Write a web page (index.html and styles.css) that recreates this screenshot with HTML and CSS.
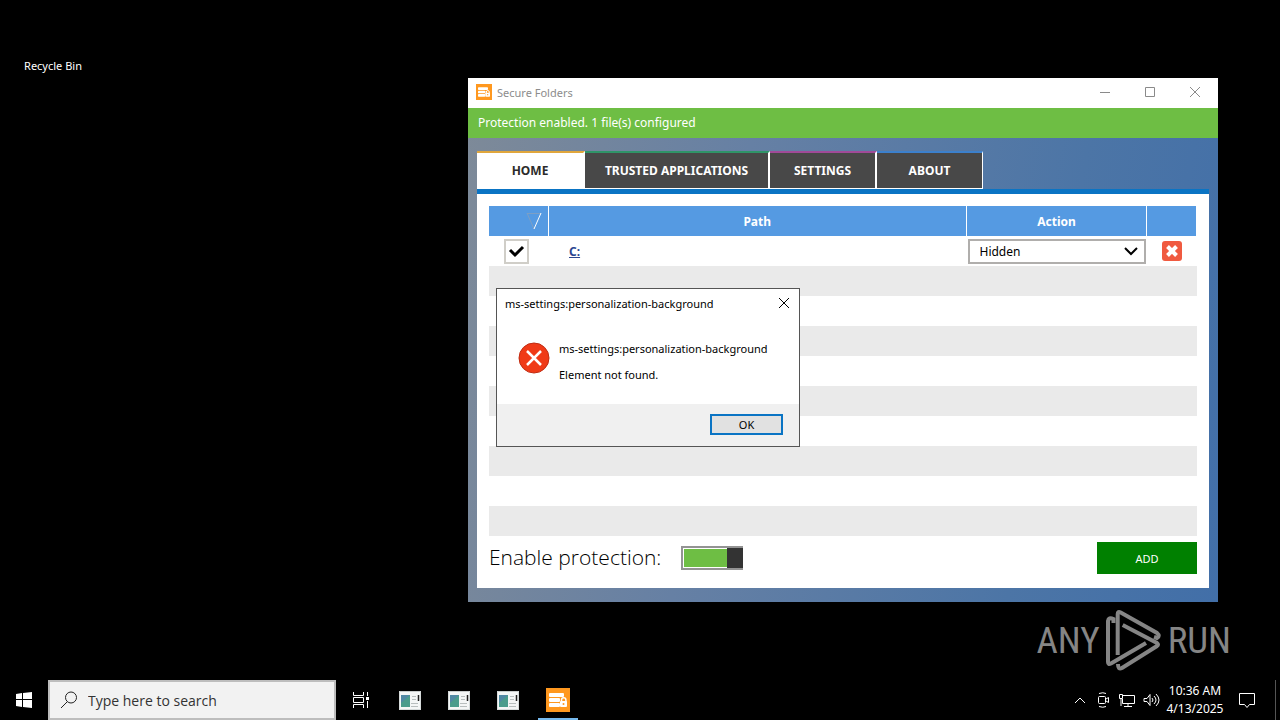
FILE: index.html
```html
<!DOCTYPE html>
<html lang="en">
  <head>
    <meta charset="UTF-8">
    <link rel="stylesheet" href="styles.css">
    <title>Secure Folders</title>
  </head>
  <body>
    <svg class="defs" aria-hidden="true">
      <symbol id="app-icon" viewBox="0 0 24 24">
        <rect width="24" height="24" fill="#ff981f"/>
        <rect x="3" y="5" width="15" height="4" rx="1" fill="#fff"/>
        <rect x="3" y="10" width="11" height="4" rx="1" fill="#fff"/>
        <rect x="3" y="15" width="11" height="4" rx="1" fill="#fff"/>
        <path d="M15.500 14v-2a2.200 2.200 0 0 1 4.400 0v2" fill="none" stroke="#fff" stroke-width="1.500"/>
        <rect x="14" y="13" width="7" height="6" rx="1" fill="#fff"/>
        <circle cx="17.500" cy="16" r="1" fill="#ff981f"/>
      </symbol>
      <symbol id="page-icon" viewBox="0 0 22 19">
        <rect width="22" height="19" fill="#f4f6f6"/>
        <path d="M0 .5h22" stroke="#c8cccc"/>
        <path d="M.5 0v19M21.500 0v19M0 18.500h22" stroke="#d5dada"/>
        <rect x="2" y="4" width="9" height="12" fill="#4a9c8c"/>
        <path d="M2 4h9l-9 8z" fill="#5088a4"/>
        <path d="M13 5.500h4M13 8.500h4M12 12.500h7M12 15.500h7" stroke="#b8bebe"/>
        <path d="M19.500 4v6" stroke="#222" stroke-width="1.500"/>
      </symbol>
    </svg>

    <main class="desktop">
      <div class="recycle">Recycle Bin</div>

      <section class="window">
        <header class="titlebar">
          <svg class="titlebar-icon"><use href="#app-icon"/></svg>
          <span class="title">Secure Folders</span>
          <button class="win-btn" aria-label="Minimize"><svg width="12" height="12"><path d="M1 6.500h10"/></svg></button>
          <button class="win-btn" aria-label="Maximize"><svg width="12" height="12"><path d="M1.500 1.500h9v9h-9z"/></svg></button>
          <button class="win-btn" aria-label="Close"><svg width="12" height="12"><path d="M1 1l10 10M11 1L1 11"/></svg></button>
        </header>
        <div class="status">Protection enabled. 1 file(s) configured</div>
        <div class="window-body">
          <nav class="tabs">
            <button class="tab tab-home active">HOME</button>
            <button class="tab tab-trusted">TRUSTED APPLICATIONS</button>
            <button class="tab tab-settings">SETTINGS</button>
            <button class="tab tab-about">ABOUT</button>
          </nav>
          <div class="panel">
            <table class="paths">
              <thead>
                <tr>
                  <th class="col-check"><svg class="sort" width="16" height="18"><path d="M1 1.500h14" stroke="#7d9fc4"/><path d="M1 1l7 16" stroke="#7d9fc4"/><path d="M15 1L8 17" stroke="#fff"/></svg></th>
                  <th>Path</th>
                  <th class="col-action">Action</th>
                  <th class="col-remove"></th>
                </tr>
              </thead>
              <tbody>
                <tr>
                  <td><input class="check" type="checkbox" aria-label="Enabled" checked></td>
                  <td class="path"><a href="#">C:</a></td>
                  <td class="action"><select class="select" aria-label="Action"><option>Hidden</option></select></td>
                  <td class="remove"><button class="remove-btn" aria-label="Remove"><svg width="20" height="20"><rect width="20" height="20" rx="3" fill="#f05a40"/><path d="M5.500 5.500l9 9M14.500 5.500l-9 9" stroke="#fff" stroke-width="4"/></svg></button></td>
                </tr>
                <tr><td colspan="4"></td></tr>
                <tr><td colspan="4"></td></tr>
                <tr><td colspan="4"></td></tr>
                <tr><td colspan="4"></td></tr>
                <tr><td colspan="4"></td></tr>
                <tr><td colspan="4"></td></tr>
                <tr><td colspan="4"></td></tr>
                <tr><td colspan="4"></td></tr>
                <tr><td colspan="4"></td></tr>
              </tbody>
            </table>
            <div class="panel-footer">
              <label class="protect-label" for="protect">Enable protection:</label>
              <input class="toggle" type="checkbox" id="protect" checked>
              <button class="add">ADD</button>
            </div>
          </div>
        </div>
      </section>

      <section class="dialog" role="dialog">
        <header class="dialog-title">
          <span>ms-settings:personalization-background</span>
          <button class="dialog-close" aria-label="Close"><svg width="12" height="12"><path d="M1 1l10 10M11 1L1 11"/></svg></button>
        </header>
        <div class="dialog-body">
          <svg class="error" viewBox="0 0 32 32"><circle cx="16" cy="16" r="15" fill="#f03a17" stroke="#c02c12"/><path d="M9 9l14 14M23 9L9 23" stroke="#fff" stroke-width="2.500"/></svg>
          <div>
            <p>ms-settings:personalization-background</p>
            <p>Element not found.</p>
          </div>
        </div>
        <footer class="dialog-footer"><button class="ok">OK</button></footer>
      </section>

      <div class="watermark">
        <span>ANY</span>
        <svg width="60" height="64" viewBox="0 0 60 64">
          <path d="M13.700 47V6q0-3 3-1.500L53 25q3.500 3 0 5l-3-1"/>
          <path d="M18.700 17L53 35q2 1.500 0 3L18 60q-4 2-4-4"/>
          <path d="M9.500 15v-4q-5-2-5.500 2v41q0 3 3 1.500L42 35"/>
        </svg>
        <span>RUN</span>
      </div>
    </main>

    <footer class="taskbar">
      <button class="start" aria-label="Start"><svg width="16" height="16"><path d="M0 2l6-1v6H0zM7 1l9-1v7H7zM0 8h6v7l-6-1zM7 8h9v8l-9-1z" fill="#fff"/></svg></button>
      <div class="search">
        <svg width="18" height="18"><circle cx="11" cy="6.500" r="5.500"/><path d="M7 11l-6 6"/></svg>
        <input type="text" placeholder="Type here to search" aria-label="Search">
      </div>
      <button class="task-view" aria-label="Task view"><svg width="18" height="16"><path d="M1.500 0v3.500h10V0M1.500 16v-3.500h10V16M1.500 5.500h10v5h-10zM15.500 0v4M15.500 9v7"/><path d="M14 5h3v3h-3z" fill="#fff" stroke="none"/></svg></button>
      <button class="task" aria-label="Window"><svg width="22" height="19"><use href="#page-icon"/></svg></button>
      <button class="task" aria-label="Window"><svg width="22" height="19"><use href="#page-icon"/></svg></button>
      <button class="task" aria-label="Window"><svg width="22" height="19"><use href="#page-icon"/></svg></button>
      <button class="task task-active" aria-label="Secure Folders"><svg width="24" height="24"><use href="#app-icon"/></svg></button>
      <div class="tray">
        <svg width="12" height="16"><path d="M1 11l5-5 5 5"/></svg>
        <svg width="16" height="16"><rect x="4.500" y="4.500" width="7" height="7" rx="1"/><path d="M12 7l2.500-1.500v5L12 9M5 1.500q4-1.500 7 0M5 14.500q4 1.500 7 0"/></svg>
        <svg width="17" height="16"><path d="M5 3.500h11.500v8H4.500V7M1.500 2.500h3v4h-3zM10 11.500v3M6 14.500h8M3 7v7"/></svg>
        <svg width="17" height="16"><path d="M1 6.500h3l3-4v11l-3-4H1zM9 6q2 2 0 4M11 4q4 4 0 8M13 2q6 6 0 12"/></svg>
      </div>
      <div class="clock"><span>10:36 AM</span><span>4/13/2025</span></div>
      <button class="notify" aria-label="Notifications"><svg width="16" height="17"><path d="M.5 1.500h15v11h-5l-2.500 3-2.500-3h-5z"/></svg></button>
      <div class="show-desktop"></div>
    </footer>
  </body>
</html>
```

FILE: styles.css
```css
* {
    box-sizing: border-box;
}

body {
    margin: 0;
    min-height: 100vh;
    display: flex;
    flex-direction: column;
    background-color: #000;
    font-family: "Noto Sans", "Open Sans", sans-serif;
    font-size: 12px;
}

button {
    padding: 0;
    border: none;
    background: none;
    font: inherit;
    display: flex;
    align-items: center;
    justify-content: center;
}

svg {
    display: block;
    fill: none;
    stroke-width: 1;
}

.defs {
    position: absolute;
    width: 0;
    height: 0;
}

.desktop {
    position: relative;
    flex: 1;
}

.recycle {
    width: 106px;
    padding-top: 57px;
    font-size: 11px;
    line-height: 18px;
    text-align: center;
    color: #fff;
}

/* main window */
.window {
    position: absolute;
    left: 468px;
    top: 78px;
    width: 750px;
    background: linear-gradient(100deg, #7e8a98, #6680a4 35%, #4c75a6 75%, #426fa8);
}

.titlebar {
    display: flex;
    align-items: center;
    height: 30px;
    padding: 0 1px 2px 8px;
    background-color: #fff;
    color: #8c8c8c;
}

.titlebar-icon {
    width: 16px;
    height: 16px;
    margin-right: 5px;
}

.title {
    flex: 1;
    font-size: 11px;
}

.win-btn {
    width: 45px;
    height: 28px;
    stroke: #8a8a8a;
}

.status {
    padding: 0 10px;
    line-height: 30px;
    background-color: #6ebe44;
    color: #fff;
}

.window-body {
    padding: 13px 9px 14px;
}

.tabs {
    display: flex;
}

.tab {
    height: 38px;
    border-top: 2px solid;
    border-right: 2px solid #fff;
    border-bottom: 1px solid #fff;
    background-color: #484848;
    color: #fff;
    font-weight: bold;
}

.tab-home {
    width: 108px;
    border-top-color: #e0a63c;
}

.tab-trusted {
    width: 185px;
    border-top-color: #2f9468;
}

.tab-settings {
    width: 107px;
    border-top-color: #a04a98;
}

.tab-about {
    width: 106px;
    border-top-color: #3c80cc;
    border-right-width: 1px;
}

.tab.active {
    background-color: #fff;
    color: #2b2b2b;
}

.panel {
    padding: 12px 12px 14px;
    border-top: 5px solid #0a74c4;
    background-color: #fff;
}

.paths {
    width: 100%;
    border-collapse: collapse;
    table-layout: fixed;
}

.paths th,
.paths td {
    height: 30px;
    padding: 0;
}

.paths th {
    background-color: #559ae2;
    border-right: 1px solid #fff;
    color: #fff;
}

.paths tbody tr:nth-child(even) {
    background-color: #eaeaea;
}

.col-check {
    width: 59px;
}

.col-action {
    width: 180px;
}

.col-remove {
    width: 50px;
}

.sort {
    margin-left: 37px;
}

.check {
    appearance: none;
    display: block;
    width: 25px;
    height: 25px;
    margin: 0 0 0 15px;
    border: 2px solid #d0cec8;
    background: #fff url('data:image/svg+xml,<svg xmlns="http://www.w3.org/2000/svg" width="21" height="21"><path d="M4 9l5 5 8-8" fill="none" stroke="black" stroke-width="3"/></svg>') center no-repeat;
}

.path {
    font-weight: bold;
}

.path a {
    margin-left: 21px;
    color: #2c4690;
}

.select {
    appearance: none;
    display: block;
    width: 178px;
    height: 25px;
    margin-left: 1px;
    padding: 0 10px;
    border: 2px solid #b0aeac;
    border-radius: 0;
    color: #000;
    font: inherit;
    background: #fff url('data:image/svg+xml,<svg xmlns="http://www.w3.org/2000/svg" width="14" height="9"><path d="M1 1l6 6 6-6" fill="none" stroke="black" stroke-width="2"/></svg>') right 6px center no-repeat;
}

.remove-btn {
    margin: auto;
}

.panel-footer {
    display: flex;
    align-items: center;
    padding-top: 6px;
}

.protect-label {
    padding-bottom: 2px;
    font-family: "Open Sans", "Noto Sans", sans-serif;
    font-size: 21px;
    font-weight: 300;
    line-height: 30px;
    color: #000;
}

.toggle {
    appearance: none;
    width: 62px;
    height: 24px;
    margin: 0 0 0 20px;
    padding: 1px 0 1px 1px;
    border: 2px solid #939393;
    border-right: none;
    background:
        linear-gradient(#333, #333) right / 16px 100% no-repeat border-box,
        linear-gradient(#6ebe44, #6ebe44) content-box,
        #fff;
}

.add {
    width: 100px;
    height: 32px;
    margin-left: auto;
    background-color: #008000;
    color: #fff;
    font-size: 11px;
}

/* error message */
.dialog {
    position: absolute;
    left: 496px;
    top: 288px;
    width: 304px;
    border: 1px solid #555;
    background-color: #fff;
    font-size: 11px;
}

.dialog-title {
    display: flex;
    justify-content: space-between;
    align-items: center;
    height: 28px;
    padding: 0 9px 0 8px;
}

.dialog-close {
    stroke: #000;
}

.dialog-body {
    display: flex;
    align-items: flex-start;
    gap: 9px;
    padding: 24px 21px 11px;
}

.dialog-body p {
    margin: 0 0 10px;
    line-height: 16px;
}

.error {
    width: 32px;
    height: 32px;
    margin-top: 1px;
}

.dialog-footer {
    display: flex;
    justify-content: flex-end;
    padding: 10px 16px 11px;
    background-color: #f0f0f0;
}

.ok {
    width: 73px;
    height: 21px;
    border: 2px solid #0a74c4;
    background-color: #e1e1e1;
    font-size: 11px;
}

.watermark {
    position: absolute;
    right: 49px;
    bottom: 8px;
    display: flex;
    align-items: center;
    gap: 4px;
    font-family: "Roboto Condensed", "Liberation Sans Narrow", Roboto, sans-serif;
    font-size: 37px;
    color: #858585;
}

.watermark svg {
    stroke: #858585;
    stroke-width: 4;
}

/* taskbar */
.taskbar {
    display: flex;
    align-items: center;
    height: 40px;
    color: #fff;
    stroke: #fff;
}

.start {
    width: 48px;
    stroke: none;
}

.search {
    display: flex;
    align-items: center;
    gap: 10px;
    width: 288px;
    height: 40px;
    padding: 0 10px;
    border: 2px solid #bdbdbd;
    background-color: #f2f2f2;
    stroke: #222;
}

.search input {
    flex: 1;
    min-width: 0;
    padding: 0;
    border: none;
    background: none;
    font-family: "Open Sans", sans-serif;
    font-size: 14px;
}

.search input::placeholder {
    color: #333;
}

.task-view {
    width: 49px;
}

.task {
    width: 49px;
    height: 40px;
    stroke: none;
}

.task-active {
    width: 40px;
    margin-left: 6px;
    padding-top: 2px;
    border-bottom: 2px solid #76b9ed;
}

.tray {
    display: flex;
    align-items: center;
    gap: 8px;
    margin-left: auto;
}

.clock {
    display: flex;
    flex-direction: column;
    align-items: center;
    width: 70px;
    line-height: 18px;
}

.notify {
    width: 34px;
}

.show-desktop {
    width: 5px;
    height: 40px;
    margin-left: 11px;
    border-left: 1px solid #555;
}
```
